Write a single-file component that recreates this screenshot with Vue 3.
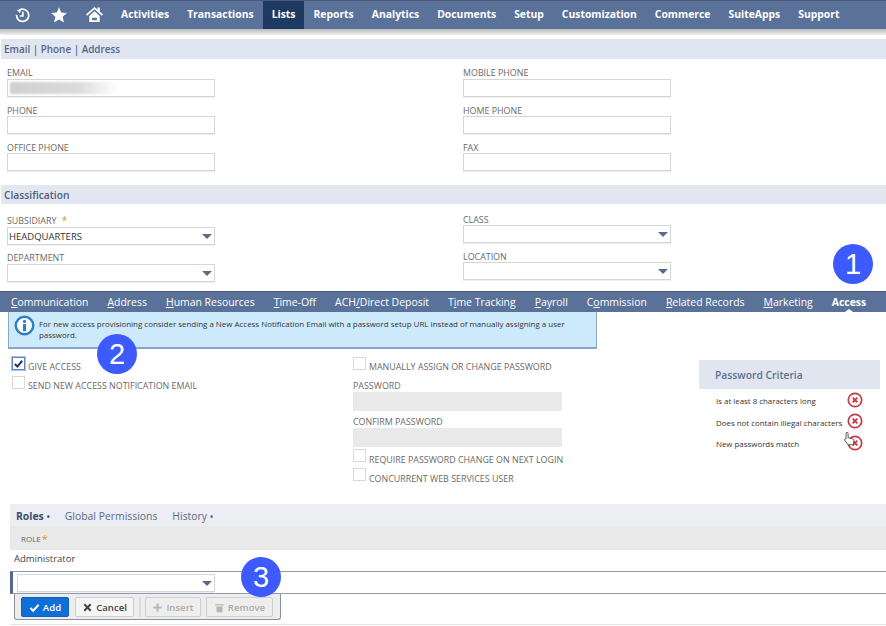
<template>
  <div class="page">
    <nav class="topnav">
      <div class="nav-icons">
        <svg class="ic-clock" viewBox="0 0 20 20"><path d="M6.2 3.8A7.2 7.2 0 1 1 3 9.2" fill="none" stroke="#fff" stroke-width="2"/><path d="M3.2 3.2l4.6.2-.6 4z" fill="#fff"/><path d="M10.4 5.6v5h-3.6" fill="none" stroke="#fff" stroke-width="2"/></svg>
        <svg class="ic-star" viewBox="0 0 20 20"><path d="M10 1.5l2.5 5.8 6.3.6-4.8 4.1 1.5 6.2L10 15l-5.5 3.2L6 12 1.2 7.9l6.3-.6z" fill="#fff"/></svg>
        <svg class="ic-home" viewBox="0 0 20 20"><path d="M1 10l9-8 3.2 2.8V2.6h2.4v4.3L19 10l-1.2 1.3L10 4.4l-7.800 6.900z" fill="#fff"/><path d="M4.500 11.500L10 6.600l5.500 4.900V18H4.500zM7.500 13.400v2.600h5v-2.600z" fill="#fff" fill-rule="evenodd"/></svg>
      </div>
      <a v-for="n in navItems" :key="n" class="nav-item" :class="{ active: n === 'Lists' }">{{ n }}</a>
    </nav>
    <div class="nav-shadow"></div>

    <h2 class="section first">Email | Phone | Address</h2>
    <div class="form-grid contact">
      <div class="col">
        <div v-for="f in contactLeft" :key="f" class="field">
          <label>{{ f }}</label>
          <div class="input"><span v-if="f === 'EMAIL'" class="smudge"></span></div>
        </div>
      </div>
      <div class="col">
        <div v-for="f in contactRight" :key="f" class="field">
          <label>{{ f }}</label>
          <div class="input"></div>
        </div>
      </div>
    </div>

    <h2 class="section second">Classification</h2>
    <div class="form-grid classify">
      <div class="col">
        <div class="field">
          <label>SUBSIDIARY <span class="req">*</span></label>
          <div class="input select"><span class="val">HEADQUARTERS</span><i class="caret"></i></div>
        </div>
        <div class="field">
          <label>DEPARTMENT</label>
          <div class="input select"><i class="caret"></i></div>
        </div>
      </div>
      <div class="col raised">
        <div class="field">
          <label>CLASS</label>
          <div class="input select"><i class="caret"></i></div>
        </div>
        <div class="field">
          <label>LOCATION</label>
          <div class="input select"><i class="caret"></i></div>
        </div>
      </div>
    </div>

    <div class="tabs">
      <a v-for="t in tabs" :key="t.rest" class="tab" :class="{ current: t.current }"><span class="mid">{{ t.pre }}</span><u>{{ t.key }}</u>{{ t.rest }}</a>
    </div>

    <div class="banner">
      <svg class="info" viewBox="0 0 22 22"><circle cx="11" cy="11" r="9.200" fill="#fff" stroke="#2f7fc4" stroke-width="2.600"/><circle cx="11" cy="6.800" r="1.700" fill="#2f7fc4"/><rect x="9.400" y="9.500" width="3.200" height="7.500" fill="#2f7fc4"/></svg>
      <p>For new access provisioning consider sending a New Access Notification Email with a password setup URL Instead of manually assigning a user password.</p>
    </div>

    <div class="access">
      <div class="access-left">
        <div class="check-row"><span class="box checked"><svg viewBox="0 0 12 12"><path d="M2 6.500l2.800 2.800L10 3" fill="none" stroke="#1f3560" stroke-width="2.200"/></svg></span><span>GIVE ACCESS</span></div>
        <div class="check-row"><span class="box"></span><span>SEND NEW ACCESS NOTIFICATION EMAIL</span></div>
      </div>
      <div class="access-mid">
        <div class="check-row"><span class="box"></span><span>MANUALLY ASSIGN OR CHANGE PASSWORD</span></div>
        <div class="field pw"><label>PASSWORD</label><div class="disabled-input"></div></div>
        <div class="field pw gapped"><label>CONFIRM PASSWORD</label><div class="disabled-input"></div></div>
        <div class="check-row tight"><span class="box"></span><span>REQUIRE PASSWORD CHANGE ON NEXT LOGIN</span></div>
        <div class="check-row"><span class="box"></span><span>CONCURRENT WEB SERVICES USER</span></div>
      </div>
      <aside class="criteria">
        <h3>Password Criteria</h3>
        <div class="crit-list">
          <div v-for="c in criteria" :key="c" class="crit">
            <span>{{ c }}</span>
            <svg class="x" viewBox="0 0 16 16"><circle cx="8" cy="8" r="6.700" fill="#fff" stroke="#c43b45" stroke-width="1.700"/><path d="M5.700 5.700l4.600 4.600M10.300 5.700l-4.600 4.600" stroke="#c43b45" stroke-width="1.900"/></svg>
          </div>
        </div>
      </aside>
    </div>

    <section class="roles">
      <div class="subtabs">
        <span class="sub on">Roles<b>•</b></span>
        <span class="sub">Global Permissions</span>
        <span class="sub">History<b>•</b></span>
      </div>
      <div class="role-head">ROLE<span class="req big">*</span></div>
      <div class="role-row">Administrator</div>
      <div class="role-edit">
        <div class="input select role-select"><i class="caret"></i></div>
      </div>
      <div class="actions">
        <button class="btn primary"><svg viewBox="0 0 12 12"><path d="M1.500 6.500l3 3L10.500 3" fill="none" stroke="#fff" stroke-width="2.200"/></svg>Add</button>
        <button class="btn strong"><svg viewBox="0 0 12 12"><path d="M2.500 2.500l7 7M9.500 2.500l-7 7" stroke="#444" stroke-width="2.200"/></svg>Cancel</button>
        <span class="sep"></span>
        <button class="btn off"><svg viewBox="0 0 12 12"><path d="M6 1.500v9M1.500 6h9" stroke="#b5b5b5" stroke-width="2.200"/></svg>Insert</button>
        <button class="btn off"><svg viewBox="0 0 12 12"><path d="M1.500 2.500h9v1.300h-9zM2.500 4.800h7l-.6 6.400H3.100z" fill="#b5b5b5"/></svg>Remove</button>
      </div>
    </section>

    <span class="badge b1">1</span>
    <span class="badge b2">2</span>
    <span class="badge b3">3</span>
    <svg class="cursor" viewBox="0 0 14 18"><path d="M4 1.500c1 0 1.400.6 1.400 1.500v4.500l5 1.300c1.200.4 1.800 1 1.600 2.300l-.7 4.400H5.500L1.800 10.600c-.7-1-.3-1.700.5-1.800l.8.300V3c0-1 .1-1.500.9-1.500z" fill="#fff" stroke="#444" stroke-width="1"/></svg>
  </div>
</template>

<script setup>
const navItems = ['Activities', 'Transactions', 'Lists', 'Reports', 'Analytics', 'Documents', 'Setup', 'Customization', 'Commerce', 'SuiteApps', 'Support']
const contactLeft = ['EMAIL', 'PHONE', 'OFFICE PHONE']
const contactRight = ['MOBILE PHONE', 'HOME PHONE', 'FAX']
const tabs = [
  { pre: '', key: 'C', rest: 'ommunication' },
  { pre: '', key: 'A', rest: 'ddress' },
  { pre: '', key: 'H', rest: 'uman Resources' },
  { pre: '', key: 'T', rest: 'ime-Off' },
  { pre: 'ACH', key: '/', rest: 'Direct Deposit' },
  { pre: 'T', key: 'i', rest: 'me Tracking' },
  { pre: '', key: 'P', rest: 'ayroll' },
  { pre: 'C', key: 'o', rest: 'mmission' },
  { pre: '', key: 'R', rest: 'elated Records' },
  { pre: '', key: 'M', rest: 'arketing' },
  { pre: '', key: '', rest: 'Access', current: true }
]
const criteria = ['Is at least 8 characters long', 'Does not contain illegal characters', 'New passwords match']
</script>

<style>
html, body { margin: 0; background: #fff; }
</style>

<style scoped>
.page {
  position: relative;
  width: 886px;
  height: 626px;
  overflow: hidden;
  background: #fff;
  font-family: "Open Sans", "Liberation Sans", sans-serif;
  color: #555;
}
.topnav {
  display: flex;
  align-items: stretch;
  height: 29px;
  box-sizing: border-box;
  border-top: 1px solid #4c5a78;
  background: #5a7299;
}
.nav-icons { display: flex; align-items: center; width: 112px; flex: none; }
.nav-icons svg { display: block; flex: none; }
.ic-clock { width: 17px; height: 17px; margin-left: 14px; }
.ic-star { width: 18px; height: 18px; margin-left: 18.500px; }
.ic-home { width: 19px; height: 19px; margin-left: 17px; margin-bottom: 2px; }
.nav-item {
  display: flex;
  align-items: center;
  padding: 0 9px 2px;
  font-size: 10.370px;
  font-weight: 700;
  color: #fff;
}
.nav-item.active { background: #1f3a62; }
.nav-shadow {
  height: 6px;
  background: linear-gradient(#b8b9ba, #f0f0f0);
  margin-bottom: 4px;
}
.section {
  margin: 0 0 0 1px;
  padding-left: 3px;
  font-weight: 600;
  color: #56657f;
  display: flex;
  align-items: center;
}
.section.first { height: 20px; background: #dfe6f2; font-size: 9.900px; }
.section.second { height: 19px; background: #e3e6f1; margin-top: 14px; font-size: 10.250px; color: #4c5f7f; }
.form-grid { display: grid; grid-template-columns: 456px 208px; padding-left: 7px; }
.contact { padding-top: 8px; }
.classify { padding-top: 10px; height: 87px; box-sizing: border-box; }
.col { display: flex; flex-direction: column; gap: 7px; }
.classify .col { gap: 6px; }
.col.raised { margin-top: -2px; }
.field label {
  display: block;
  height: 12px;
  line-height: 12px;
  font-size: 8.900px;
  color: #6a6a6a;
}
.contact .field + .field label { line-height: 13px; }
.classify .field label { height: 13px; line-height: 13px; }
.classify .field + .field label { line-height: 14px; }
.classify .raised .field label { line-height: 15px; }
.req { color: #d9932f; font-size: 10px; margin-left: 3px; }
.req.big { font-size: 11px; vertical-align: 1px; margin-left: 1px; }
.input {
  position: relative;
  width: 208px;
  height: 18px;
  box-sizing: border-box;
  border: 1px solid #d6d6d6;
  background: #fff;
  box-shadow: 0 1px 0 #eee;
}
.select { display: flex; align-items: center; }
.val { font-size: 9.500px; padding-left: 1px; color: #333; }
.caret {
  position: absolute;
  right: 2.500px;
  top: 6px;
  border-left: 5px solid transparent;
  border-right: 5px solid transparent;
  border-top: 5px solid #5e6d85;
}
.smudge {
  position: absolute;
  left: 2px;
  top: 2px;
  width: 108px;
  height: 12px;
  background: linear-gradient(90deg, #cfcfcf, #dcdcdc 65%, #fff);
  filter: blur(1px);
}
.tabs {
  display: flex;
  gap: 19px;
  height: 21px;
  padding-left: 11px;
  background: #5a7299;
  border-top: 1px solid #4c5a78;
  box-sizing: border-box;
  align-items: center;
  font-size: 10.440px;
  color: #fff;
  white-space: nowrap;
}
.tab { position: relative; height: 100%; padding-bottom: 1px; box-sizing: border-box; display: flex; align-items: center; white-space: pre; }
.tab.current { font-weight: 700; }
.tab.current::after {
  content: "";
  position: absolute;
  left: 50%;
  bottom: 0;
  margin-left: -4px;
  border-left: 4px solid transparent;
  border-right: 4px solid transparent;
  border-bottom: 3px solid #fff;
}
.banner {
  display: flex;
  align-items: flex-start;
  gap: 4px;
  box-sizing: border-box;
  width: 589px;
  height: 37px;
  margin-left: 8px;
  padding: 3px 6px 0 5px;
  background: #cdeafc;
  border: 1px solid #8aa5c7;
  border-top: none;
  border-bottom-width: 2px;
}
.info { width: 21px; height: 21px; flex: none; }
.banner p {
  margin: 4px 0 0;
  font-size: 7.950px;
  line-height: 11px;
  color: #333;
}
.access { display: flex; height: 155px; padding-top: 8px; box-sizing: border-box; }
.access-left { width: 353px; flex: none; padding-left: 12px; box-sizing: border-box; }
.access-mid { width: 346px; flex: none; }
.check-row {
  display: flex;
  align-items: center;
  gap: 3px;
  height: 19px;
  font-size: 8.900px;
  color: #6a6a6a;
  white-space: nowrap;
}
.access-mid .check-row.tight { margin-top: 2.500px; }
.box {
  width: 11px;
  height: 11px;
  flex: none;
  margin-bottom: 7px;
  border: 1px solid #d8d8d8;
  background: #fff;
}
.box.checked {
  border: 1px solid #5f86c0;
  box-shadow: 0 0 0 1px #a9c3e6;
  background: #fff;
}
.box svg { display: block; width: 11px; height: 11px; }
.pw label { height: 16px; line-height: 19px; }
.pw.gapped { margin-top: 1px; }
.disabled-input { width: 209px; height: 19px; background: #e9e9e9; }
.criteria { width: 181px; flex: none; margin-top: 3px; }
.criteria h3 {
  margin: 0;
  height: 29px;
  display: flex;
  align-items: center;
  padding-left: 16px;
  background: #e1e5f0;
  font-size: 10.300px;
  font-weight: 600;
  color: #5b7190;
}
.crit-list { padding-top: 1.500px; }
.crit {
  position: relative;
  height: 21.500px;
  display: flex;
  align-items: center;
  padding-left: 17px;
  font-size: 7.900px;
  color: #333;
}
.x { position: absolute; left: 148px; top: 1px; width: 16px; height: 16px; }
.roles {
  height: 121px;
  box-sizing: border-box;
  margin-left: 10px;
  border-bottom: 1px solid #e4e4e4;
}
.subtabs {
  display: flex;
  align-items: center;
  gap: 15px;
  height: 22px;
  box-sizing: border-box;
  padding: 1px 0 0 6px;
  background: #eceef4;
  font-size: 10.400px;
  color: #5a6a82;
}
.sub b { font-size: 8px; margin-left: 3px; font-weight: 700; }
.sub.on { font-weight: 700; color: #3c4f6e; }
.role-head {
  height: 24px;
  box-sizing: border-box;
  display: flex;
  align-items: center;
  padding: 1px 0 0 11px;
  background: #e9e9e9;
  font-size: 8px;
  color: #666;
}
.role-row {
  height: 21px;
  box-sizing: border-box;
  padding: 0 0 5px 4px;
  display: flex;
  align-items: center;
  font-size: 9.500px;
  color: #444;
}
.role-edit {
  height: 23px;
  box-sizing: border-box;
  border-top: 1px solid #8d9ab0;
  border-bottom: 1px solid #8d9ab0;
  border-left: 3px solid #52678c;
  padding: 2px 0 0 4px;
}
.role-select { width: 198px; height: 18px; }
.actions {
  display: flex;
  align-items: flex-start;
  gap: 5px;
  width: 267px;
  height: 26px;
  box-sizing: border-box;
  margin-left: 4px;
  padding: 3px 0 0 6px;
  background: #ededed;
  border: 1px solid #8b919b;
  border-top: none;
  border-radius: 0 0 3px 3px;
}
.btn {
  display: flex;
  align-items: center;
  justify-content: center;
  gap: 3px;
  height: 20px;
  padding: 0;
  box-sizing: border-box;
  border: 1px solid #cfcfcf;
  border-radius: 2px;
  background: #f5f5f5;
  font-family: inherit;
  font-size: 9.600px;
  font-weight: 600;
  color: #444;
}
.btn svg { width: 11px; height: 11px; flex: none; }
.btn.primary { width: 48px; background: #0f6fd8; border-color: #0d5fb8; color: #fff; }
.btn.strong { width: 59px; margin-left: 1px; }
.btn.off { color: #aaa; background: #eee; width: 56px; }
.btn.off:last-child { width: 67px; }
.sep { width: 2px; height: 20px; background: #dcdcdc; margin-right: -1px; }
.badge {
  position: absolute;
  width: 40px;
  height: 40px;
  border-radius: 50%;
  background: #3d5afe;
  color: #fff;
  font-family: "Liberation Sans", Arial, sans-serif;
  font-size: 29px;
  line-height: 40px;
  text-align: center;
}
.b1 { left: 833px; top: 244px; }
.b2 { left: 97px; top: 334px; }
.b3 { left: 241px; top: 557px; }
.cursor { position: absolute; left: 843px; top: 431px; width: 13px; height: 16px; }
</style>
